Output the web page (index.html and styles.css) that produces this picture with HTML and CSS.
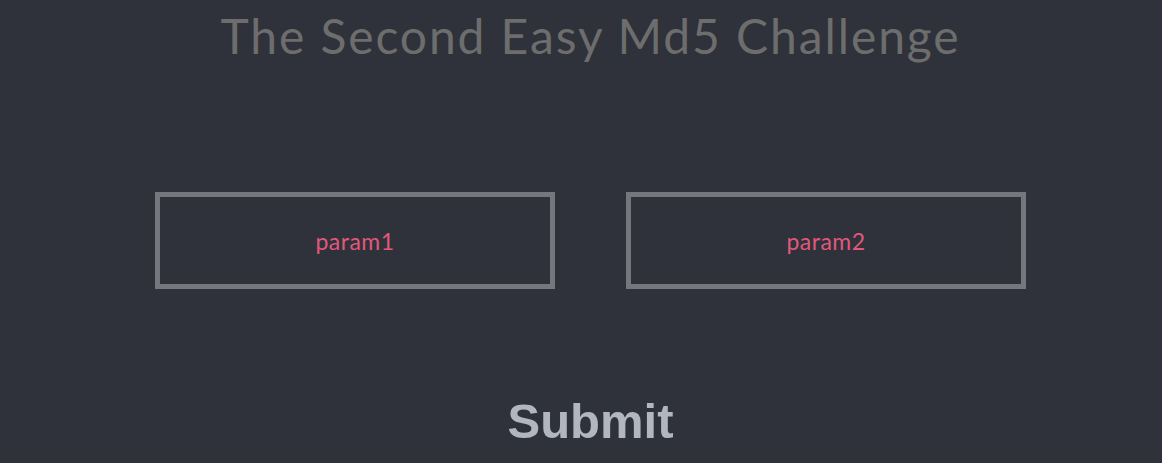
FILE: index.html
```html
<!DOCTYPE html>
<html>
<head>
<meta charset="utf-8">
<link rel="stylesheet" href="styles.css">
</head>
<body>
<div class="page">
  <h1 class="title">The Second Easy Md5 Challenge</h1>
  <form class="form">
    <div class="fields">
      <input class="field" type="text" placeholder="param1">
      <input class="field" type="text" placeholder="param2">
    </div>
    <button class="submit" type="button">Submit</button>
  </form>
</div>
</body>
</html>
```
FILE: styles.css
```css
html, body {
  margin: 0;
  padding: 0;
  background: #2f323a;
  height: 100%;
}
.page {
  display: flex;
  flex-direction: column;
  align-items: center;
  padding-left: 19px;
}
.title {
  margin: 8px 0 0 0;
  font-family: "Lato", "Open Sans", sans-serif;
  font-weight: 400;
  font-size: 48px;
  line-height: 56px;
  color: #6d6d6d;
  letter-spacing: 1.9px;
}
.form {
  display: flex;
  flex-direction: column;
  align-items: center;
}
.fields {
  display: flex;
  gap: 71px;
  margin-top: 128px;
}
.field {
  box-sizing: border-box;
  width: 400px;
  height: 97px;
  border: 5px solid #74777e;
  background: transparent;
  outline: none;
  text-align: center;
  font-family: "Lato", "Open Sans", sans-serif;
  font-size: 23px;
  letter-spacing: 0.5px;
  padding: 0;
  color: #e0587b;
}
.field::placeholder {
  color: #e0587b;
  opacity: 1;
}
.submit {
  margin-top: 104px;
  background: none;
  border: none;
  padding: 0;
  font-family: "Liberation Sans", Arial, sans-serif;
  font-weight: bold;
  font-size: 49px;
  line-height: 56px;
  color: #b1b6bf;
}
```
